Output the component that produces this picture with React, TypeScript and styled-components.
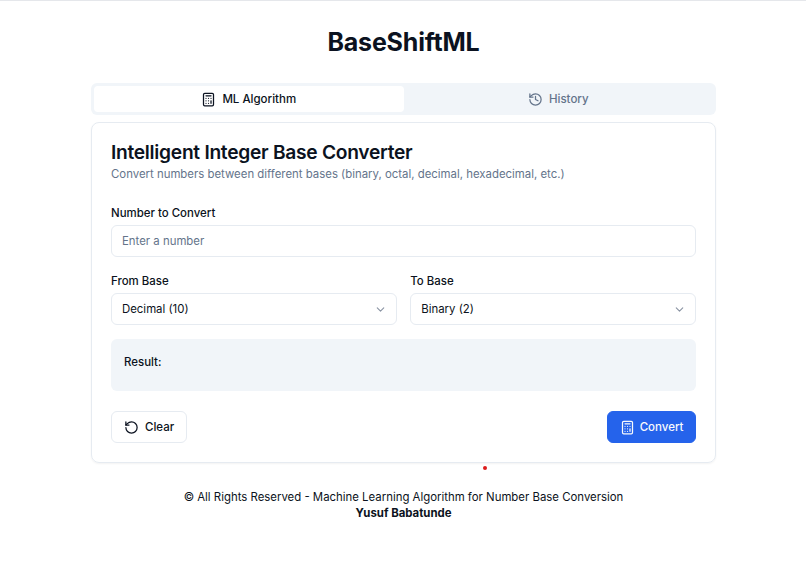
import React from "react";
import styled, { createGlobalStyle } from "styled-components";
import { Calculator, History, RotateCcw, ChevronDown } from "lucide-react";

const Global = createGlobalStyle`
  * { box-sizing: border-box; }
  html, body { margin: 0; padding: 0; background: #fff; }
  body { font-family: Inter, "Liberation Sans", sans-serif; color: #0b1220; }
`;

const Page = styled.div`
  width: 806px;
  height: 569px;
  overflow: hidden;
  border-top: 1px solid #e5e7eb;
  padding: 23px 90px 0 91px;
  position: relative;
`;
const Title = styled.h1`
  margin: 0 0 23px;
  font-size: 25px;
  line-height: 36px;
  font-weight: 700;
  text-align: center;
  letter-spacing: -0.2px;
`;
const Tabs = styled.div`
  display: grid;
  grid-template-columns: 1fr 1fr;
  height: 32px;
  padding: 3px;
  background: #f1f5f9;
  border-radius: 6px;
  margin-bottom: 7px;
`;
const Tab = styled.div<{ $active?: boolean }>`
  display: flex;
  align-items: center;
  justify-content: center;
  gap: 6px;
  font-size: 11.5px;
  font-weight: 500;
  border-radius: 4px;
  color: ${(p) => (p.$active ? "#0b1220" : "#64748b")};
  background: ${(p) => (p.$active ? "#fff" : "transparent")};
`;
const Card = styled.div`
  border: 1px solid #e6ebf1;
  border-radius: 8px;
  height: 341px;
  padding: 19px;
  box-shadow: 0 1px 2px rgba(0, 0, 0, 0.05);
`;
const Heading = styled.h2`
  margin: 0;
  font-size: 19.2px;
  line-height: 20px;
  font-weight: 600;
  letter-spacing: -0.28px;
`;
const Sub = styled.p`
  margin: 3px 0 0;
  font-size: 11.4px;
  line-height: 18px;
  color: #64748b;
`;
const Field = styled.div`
  display: flex;
  flex-direction: column;
  gap: 5px;
`;
const Label = styled.label`
  font-size: 11.45px;
  line-height: 14px;
  font-weight: 500;
`;
const Input = styled.div<{ $muted?: boolean }>`
  height: 32px;
  border: 1px solid #e6ebf1;
  border-radius: 6px;
  padding: 0 9px 0 10px;
  display: flex;
  align-items: center;
  justify-content: space-between;
  font-size: 11.4px;
  color: ${(p) => (p.$muted ? "#64748b" : "#0b1220")};
`;
const FirstField = styled(Field)`
  margin-top: 23px;
`;
const Row = styled.div`
  display: grid;
  grid-template-columns: 1fr 1fr;
  gap: 13.5px;
  margin-top: 17px;
`;
const Result = styled.div`
  margin-top: 14px;
  height: 52px;
  background: #f1f5f9;
  border-radius: 6px;
  padding: 16px 13px 0;
  font-size: 11.45px;
  line-height: 15px;
  font-weight: 500;
`;
const Actions = styled.div`
  display: flex;
  justify-content: space-between;
  margin-top: 20px;
`;
const Button = styled.div<{ $primary?: boolean }>`
  height: 32px;
  display: flex;
  align-items: center;
  gap: ${(p) => (p.$primary ? "5px" : "6px")};
  padding: 0 ${(p) => (p.$primary ? "11.5px" : "12px")};
  border-radius: 6px;
  font-size: 11.5px;
  font-weight: 500;
  border: 1px solid ${(p) => (p.$primary ? "#2563eb" : "#e6ebf1")};
  background: ${(p) => (p.$primary ? "#2563eb" : "#fff")};
  color: ${(p) => (p.$primary ? "#f8fafc" : "#0b1220")};
`;
const Footer = styled.div`
  margin-top: 26px;
  text-align: center;
  font-size: 11.4px;
  line-height: 16px;
`;
const Strong = styled.div`
  font-weight: 700;
`;
const Dot = styled.span`
  position: absolute;
  left: 483px;
  top: 465px;
  width: 4px;
  height: 4px;
  border-radius: 50%;
  background: #dc1c1c;
`;

export default function App() {
  return (
    <Page>
      <Global />
      <Title>BaseShiftML</Title>
      <Tabs>
        <Tab $active><Calculator size={15} />ML Algorithm</Tab>
        <Tab><History size={15} />History</Tab>
      </Tabs>
      <Card>
        <Heading>Intelligent Integer Base Converter</Heading>
        <Sub>Convert numbers between different bases (binary, octal, decimal, hexadecimal, etc.)</Sub>
        <FirstField>
          <Label>Number to Convert</Label>
          <Input $muted>Enter a number</Input>
        </FirstField>
        <Row>
          <Field>
            <Label>From Base</Label>
            <Input>Decimal (10)<ChevronDown size={13} color="#8a93a3" /></Input>
          </Field>
          <Field>
            <Label>To Base</Label>
            <Input>Binary (2)<ChevronDown size={13} color="#8a93a3" /></Input>
          </Field>
        </Row>
        <Result>Result:</Result>
        <Actions>
          <Button><RotateCcw size={15} />Clear</Button>
          <Button $primary><Calculator size={15} />Convert</Button>
        </Actions>
      </Card>
      <Dot />
      <Footer>
        © All Rights Reserved - Machine Learning Algorithm for Number Base Conversion
        <Strong>Yusuf Babatunde</Strong>
      </Footer>
    </Page>
  );
}
